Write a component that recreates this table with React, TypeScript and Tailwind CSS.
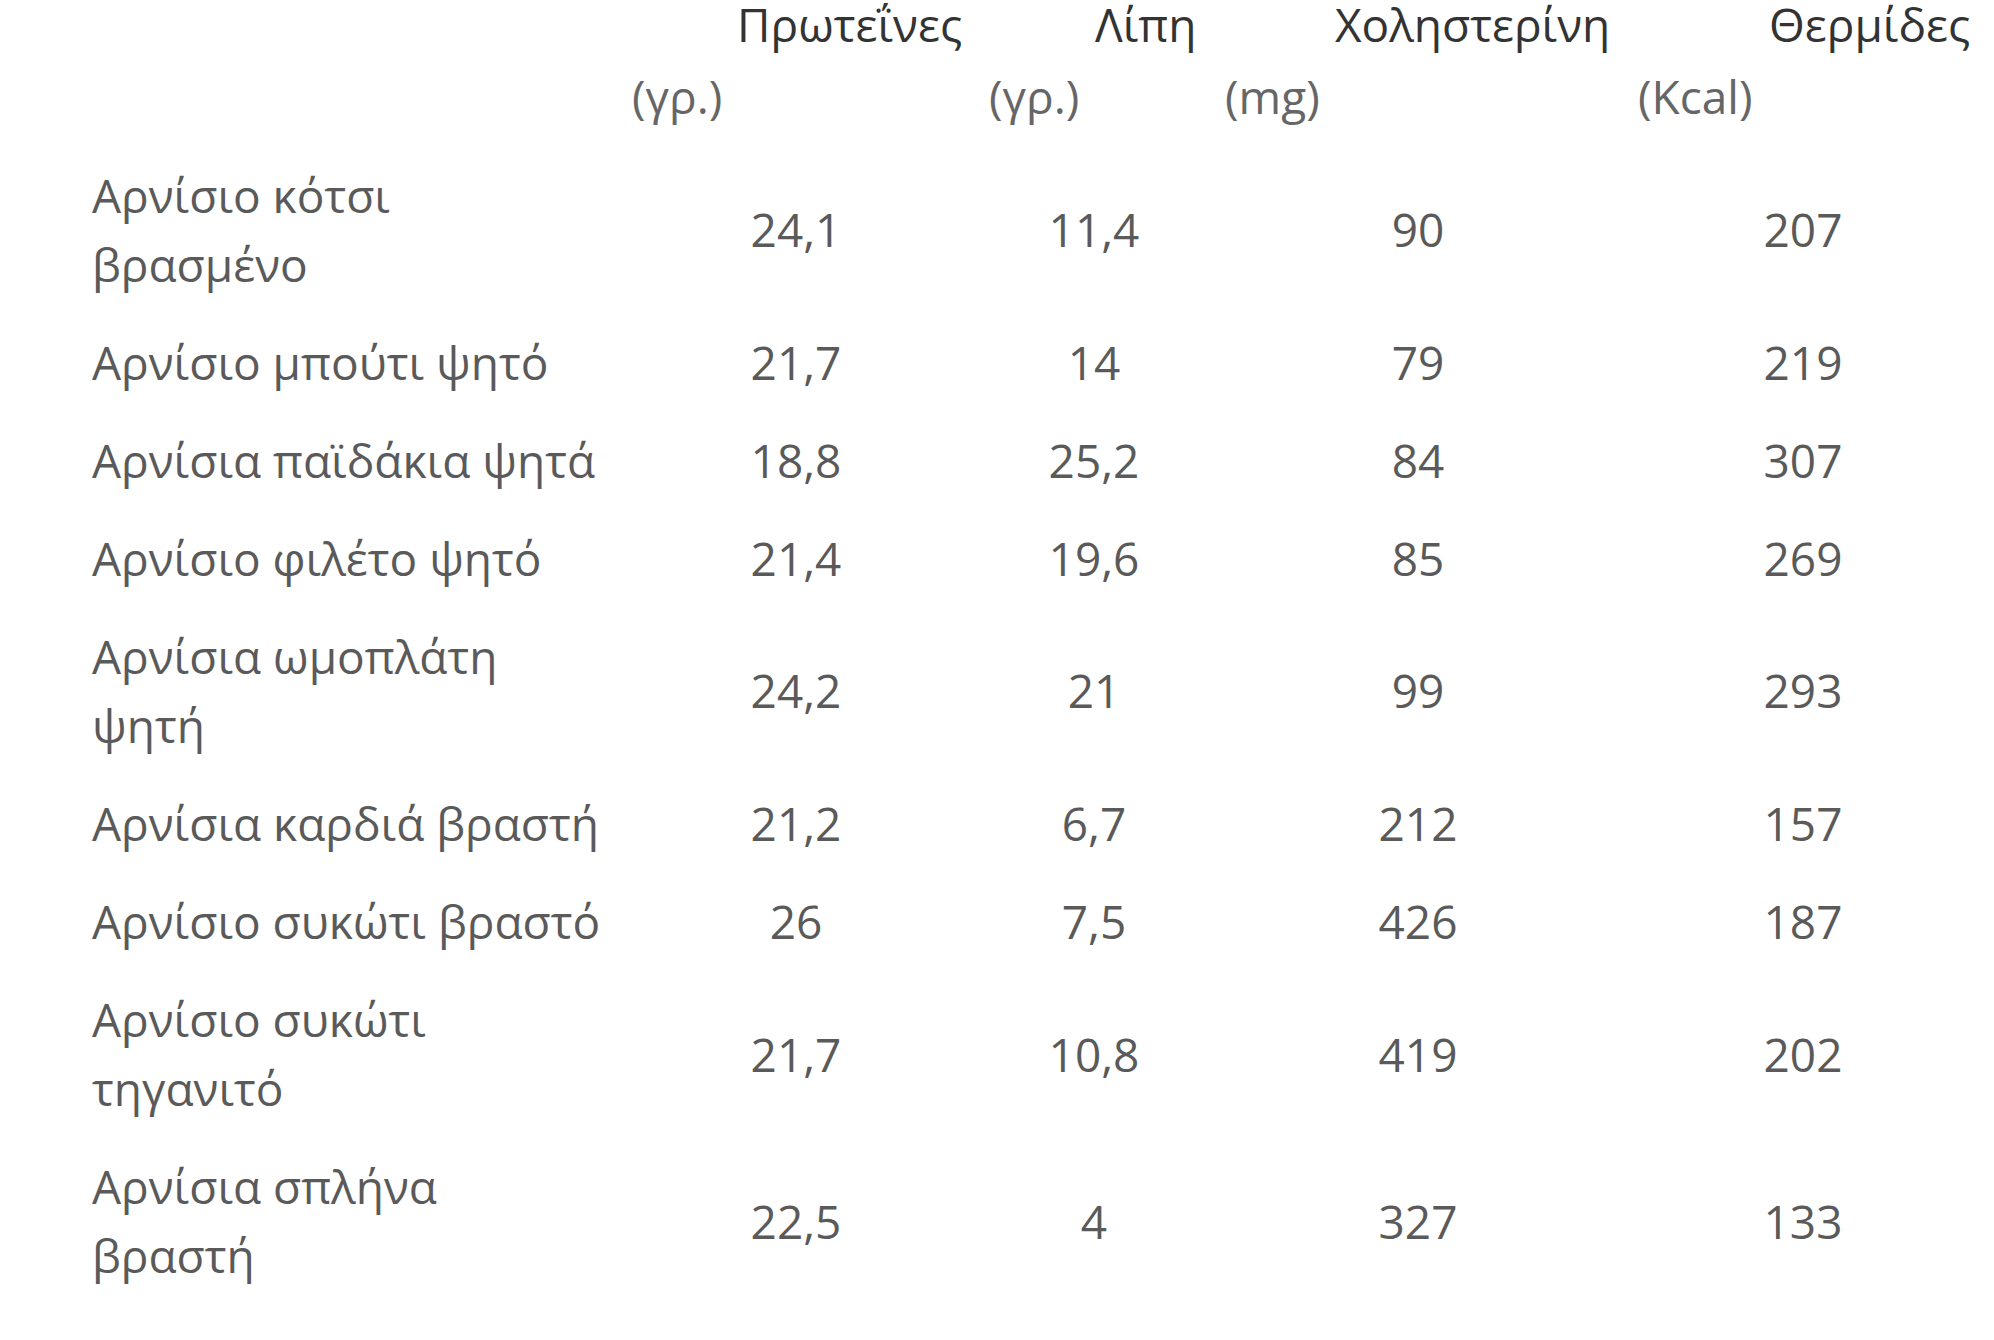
import React from "react";

const rows: [string[], string, string, string, string][] = [
  [["Αρνίσιο κότσι", "βρασμένο"], "24,1", "11,4", "90", "207"],
  [["Αρνίσιο μπούτι ψητό"], "21,7", "14", "79", "219"],
  [["Αρνίσια παϊδάκια ψητά"], "18,8", "25,2", "84", "307"],
  [["Αρνίσιο φιλέτο ψητό"], "21,4", "19,6", "85", "269"],
  [["Αρνίσια ωμοπλάτη", "ψητή"], "24,2", "21", "99", "293"],
  [["Αρνίσια καρδιά βραστή"], "21,2", "6,7", "212", "157"],
  [["Αρνίσιο συκώτι βραστό"], "26", "7,5", "426", "187"],
  [["Αρνίσιο συκώτι", "τηγανιτό"], "21,7", "10,8", "419", "202"],
  [["Αρνίσια σπλήνα", "βραστή"], "22,5", "4", "327", "133"],
];

export default function App() {
  return (
    <div
      className="w-[1994px] h-[1340px] overflow-hidden bg-white text-[46px]"
      style={{ fontFamily: '"Open Sans", "Noto Sans", sans-serif' }}
    >
      <div className="-mt-[8px] leading-[65px] whitespace-nowrap">
        <div className="flex text-[#333333]">
          <div className="w-[737px] shrink-0" />
          <div className="w-[358px] shrink-0">Πρωτεΐνες</div>
          <div className="w-[240px] shrink-0">Λίπη</div>
          <div className="w-[434px] shrink-0">Χοληστερίνη</div>
          <div>Θερμίδες</div>
        </div>
        <div className="flex mt-[6.5px] text-[#666666]">
          <div className="w-[632px] shrink-0" />
          <div className="w-[357px] shrink-0">(γρ.)</div>
          <div className="w-[236px] shrink-0">(γρ.)</div>
          <div className="w-[413px] shrink-0">(mg)</div>
          <div>(Kcal)</div>
        </div>
      </div>
      <div className="mt-[17.5px] text-[#5a5a5a] leading-[69px]">
        {rows.map((r, i) => (
          <div
            key={i}
            className="grid grid-cols-[643px_306px_290px_358px_397px] items-center py-[14.55px]"
          >
            <div className="pl-[92px] whitespace-nowrap">
              {r[0].map((line, j) => (
                <div key={j}>{line}</div>
              ))}
            </div>
            <div className="text-center">{r[1]}</div>
            <div className="text-center">{r[2]}</div>
            <div className="text-center">{r[3]}</div>
            <div className="text-center pl-[15px]">{r[4]}</div>
          </div>
        ))}
      </div>
    </div>
  );
}
